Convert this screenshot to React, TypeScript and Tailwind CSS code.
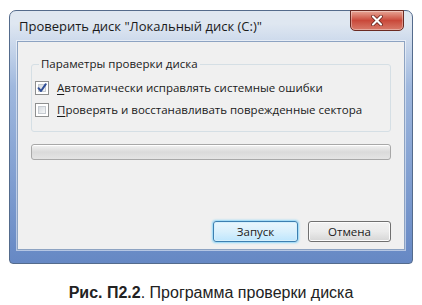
import React from "react";

const ui = { fontFamily: '"Open Sans", "Noto Sans", sans-serif' };

function CheckBox({ checked }: { checked?: boolean }) {
  return (
    <span className="flex h-[14px] w-[14px] shrink-0 items-center justify-center border border-[#8e8f8f] bg-white p-[2px]">
      <span className="flex h-full w-full items-center justify-center border border-[#c6cbd1] bg-gradient-to-br from-[#d6dbe0] to-[#f6f7f8]">
        {checked && (
          <svg width="10" height="10" viewBox="0 0 10 10" className="overflow-visible">
            <path d="M1.5 5.2 L4 8 L8.8 1.2" fill="none" stroke="#2e4d96" strokeWidth="2" strokeLinecap="round" strokeLinejoin="round" />
          </svg>
        )}
      </span>
    </span>
  );
}

export default function App() {
  return (
    <div className="h-[305px] w-[422px] overflow-hidden bg-white">
      <div className="pl-[9px] pt-[10px]">
        {/* window frame */}
        <div className="flex h-[254px] w-[404px] flex-col rounded-t-[7px] rounded-b-[4px] border border-[#546b8c] bg-gradient-to-b from-[#dfe7f1] from-5% via-[#9fb8de] via-30% to-[#6688c4] px-[7px] pb-[13px]">
          {/* title bar */}
          <div className="flex h-[30px] items-start justify-between">
            <span className="mt-[6px] ml-[2px] whitespace-nowrap text-[13px] leading-[18px] text-[#1a1a1a]" style={ui}>
              Проверить диск "Локальный диск (C:)"
            </span>
            <div className="-mt-px mr-px flex h-[21px] w-[54px] items-center justify-center rounded-b-[5px] border border-[#6b2a22] bg-gradient-to-b from-[#e6a596] via-[#c9483a] to-[#d87a6a] shadow-[inset_0_0_0_1px_rgba(255,255,255,0.35)]">
              <svg width="12" height="11" viewBox="0 0 12 11">
                <path d="M2 1.5 L10 9.5 M10 1.5 L2 9.5" stroke="#5a1a14" strokeWidth="3.6" strokeLinecap="round" />
                <path d="M2 1.5 L10 9.5 M10 1.5 L2 9.5" stroke="#ffffff" strokeWidth="2.2" strokeLinecap="round" />
              </svg>
            </div>
          </div>
          {/* client area */}
          <div className="flex flex-1 flex-col border border-[#8da3c2] bg-[#f0f0f0] px-[13px] shadow-[0_0_0_1px_rgba(255,255,255,0.5)]" style={ui}>
            <fieldset className="mt-[14px] h-[76px] rounded-[3px] border border-[#d5dfe5] px-[3px]">
              <legend className="ml-[4px] whitespace-nowrap px-[2px] text-[11.5px] leading-[16px] text-[#1a1a1a]">
                Параметры проверки диска
              </legend>
              <div className="mt-[8px] flex flex-col gap-[7px] whitespace-nowrap text-[11.5px] leading-[15px] text-[#1a1a1a]">
                <label className="flex items-center gap-[8px]">
                  <CheckBox checked />
                  <span>
                    <span className="underline underline-offset-2">А</span>втоматически исправлять системные ошибки
                  </span>
                </label>
                <label className="flex items-center gap-[8px]">
                  <CheckBox />
                  <span>
                    <span className="underline underline-offset-2">П</span>роверять и восстанавливать поврежденные сектора
                  </span>
                </label>
              </div>
            </fieldset>
            <div className="mt-[12px] h-[16px] rounded-[3px] border border-[#a8a8a8] bg-gradient-to-b from-[#f3f3f3] via-[#dadada] to-[#e4e4e4] shadow-[inset_0_1px_0_#ffffff]" />
            <div className="mt-auto mb-[7px] flex justify-end gap-[10px] text-[11.5px] text-[#1a1a1a]">
              <button className="h-[21px] w-[85px] rounded-[3px] border border-[#3c7fb1] bg-gradient-to-b from-[#eaf6fd] via-[#d9f0fc] to-[#bee6fd] leading-[19px] shadow-[0_0_2px_1px_#8ed6f7,inset_0_0_0_1px_#d5f0fc]">
                Запуск
              </button>
              <button className="h-[21px] w-[83px] rounded-[3px] border border-[#707070] bg-gradient-to-b from-[#f2f2f2] via-[#ebebeb] to-[#d6d6d6] leading-[19px] shadow-[inset_0_0_0_1px_#fcfcfc]">
                Отмена
              </button>
            </div>
          </div>
        </div>
      </div>
      <div className="mt-[19px] text-center text-[16px] leading-[20px] text-[#222]" style={{ fontFamily: '"Liberation Sans", Arial, sans-serif' }}>
        <span className="font-bold">Рис. П2.2</span>. Программа проверки диска
      </div>
    </div>
  );
}
